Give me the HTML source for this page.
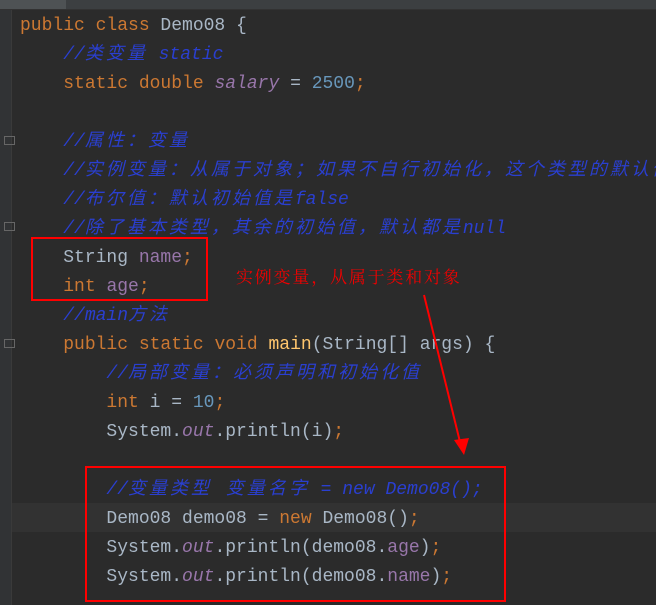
<!DOCTYPE html>
<html><head><meta charset="utf-8"><style>
html,body{margin:0;padding:0;width:656px;height:605px;overflow:hidden;background:#2b2b2b}
.top{position:absolute;left:0;top:0;width:656px;height:9px;background:#3c3f41;border-bottom:1px solid #323232}
.tab{position:absolute;left:0;top:0;width:66px;height:9px;background:#4e5254}
.gut{position:absolute;left:0;top:10px;width:11px;height:595px;background:#313335;border-right:1px solid #3a3a3a}
.cur{position:absolute;left:12px;top:503px;width:644px;height:29px;background:#323232}
.code{position:absolute;left:20px;top:12px;width:636px;height:593px;overflow:hidden;font:18px/29px "Liberation Mono","Noto Sans CJK SC",monospace;color:#a9b7c6;white-space:pre}
.k{color:#cc7832}.cm{color:#2a3fd0;font-style:italic}.f{color:#9876aa}.fi{color:#9876aa;font-style:italic}.n{color:#6897bb}.m{color:#ffc66d}
.c{letter-spacing:3px}
.box{position:absolute;border:2px solid #f00}
.lbl{position:absolute;left:236px;top:263px;color:#e00;font:17px "Noto Serif CJK SC","Noto Sans CJK SC",serif;letter-spacing:1.8px}
.fold{position:absolute;left:4px;width:11px;height:9px;border:1px solid #666;box-sizing:border-box}
</style></head><body>
<div class="top"><div class="tab"></div></div>
<div class="gut"></div>
<div class="cur"></div>
<div class="fold" style="top:136px"></div>
<div class="fold" style="top:222px"></div>
<div class="fold" style="top:339px"></div>
<div class="code"><span class="k">public class</span> Demo08 {
    <span class="cm">//<span class="c">类变量</span> static</span>
    <span class="k">static double</span> <span class="fi">salary</span> = <span class="n">2500</span><span class="k">;</span>

    <span class="cm">//<span class="c">属性：变量</span></span>
    <span class="cm">//<span class="c">实例变量：从属于对象；如果不自行初始化，这个类型的默认值</span></span>
    <span class="cm">//<span class="c">布尔值：默认初始值是</span>false</span>
    <span class="cm">//<span class="c">除了基本类型，其余的初始值，默认都是</span>null</span>
    String <span class="f">name</span><span class="k">;</span>
    <span class="k">int</span> <span class="f">age</span><span class="k">;</span>
    <span class="cm">//main<span class="c">方法</span></span>
    <span class="k">public static void</span> <span class="m">main</span>(String[] args) {
        <span class="cm">//<span class="c">局部变量：必须声明和初始化值</span></span>
        <span class="k">int</span> i = <span class="n">10</span><span class="k">;</span>
        System.<span class="fi">out</span>.println(i)<span class="k">;</span>

        <span class="cm">//<span class="c">变量类型 变量名字</span> = new Demo08();</span>
        Demo08 demo08 = <span class="k">new</span> Demo08()<span class="k">;</span>
        System.<span class="fi">out</span>.println(demo08.<span class="f">age</span>)<span class="k">;</span>
        System.<span class="fi">out</span>.println(demo08.<span class="f">name</span>)<span class="k">;</span></div>
<div class="box" style="left:31px;top:237px;width:173px;height:60px"></div>
<div class="box" style="left:85px;top:466px;width:417px;height:132px"></div>
<div class="lbl">实例变量，从属于类和对象</div>
<svg style="position:absolute;left:0;top:0" width="656" height="605"><line x1="424" y1="295" x2="460" y2="442" stroke="#f00" stroke-width="2"/><polygon points="454,440 469,438 464,455" fill="#f00"/></svg>
</body></html>
